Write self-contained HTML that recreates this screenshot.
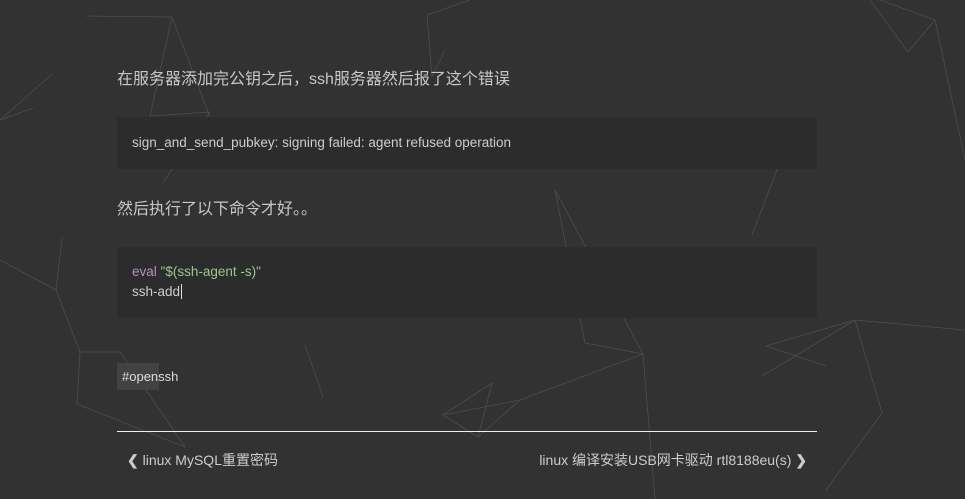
<!DOCTYPE html>
<html><head><meta charset="utf-8"><style>
body{margin:0;width:965px;height:499px;background:#323232;overflow:hidden;position:relative;font-family:"Liberation Sans","Noto Sans CJK SC",sans-serif;color:#ccc}
svg{position:absolute;left:0;top:0}
.t{position:absolute;left:117px;font-size:16px;color:#c8c8c8}
.code{position:absolute;left:117px;width:700px;background:#2c2c2c;font-size:13.5px;color:#ccc}
</style></head><body>
<svg width="965" height="499" stroke="#4d4d4d" stroke-width="0.8" fill="none">
<line x1="0" y1="120" x2="52" y2="74"/><line x1="0" y1="120" x2="33" y2="108"/><line x1="86" y1="16" x2="172" y2="17"/>
<line x1="172" y1="17" x2="210" y2="117"/><line x1="172" y1="17" x2="150" y2="116"/><line x1="150" y1="116" x2="210" y2="112"/><line x1="210" y1="112" x2="163" y2="183"/>
<line x1="427" y1="15" x2="432" y2="77"/><line x1="427" y1="15" x2="470" y2="0"/><line x1="432" y1="77" x2="445" y2="50"/>
<line x1="880" y1="0" x2="935" y2="20"/><line x1="935" y1="20" x2="908" y2="52"/><line x1="908" y1="52" x2="870" y2="0"/><line x1="935" y1="20" x2="965" y2="160"/>
<line x1="780" y1="162" x2="752" y2="235"/><line x1="555" y1="190" x2="643" y2="354"/><line x1="555" y1="190" x2="585" y2="343"/><line x1="585" y1="343" x2="643" y2="354"/><line x1="643" y1="354" x2="655" y2="499"/>
<line x1="643" y1="354" x2="520" y2="400"/><line x1="520" y1="400" x2="478" y2="437"/><line x1="520" y1="400" x2="443" y2="415"/><line x1="443" y1="415" x2="478" y2="437"/><line x1="492" y1="383" x2="443" y2="415"/><line x1="492" y1="383" x2="478" y2="437"/>
<line x1="766" y1="346" x2="855" y2="320"/><line x1="855" y1="320" x2="762" y2="376"/><line x1="766" y1="346" x2="826" y2="366"/><line x1="855" y1="320" x2="882" y2="413"/><line x1="882" y1="413" x2="826" y2="490"/><line x1="855" y1="320" x2="965" y2="330"/>
<line x1="62" y1="238" x2="56" y2="290"/><line x1="56" y1="290" x2="80" y2="352"/><line x1="80" y1="352" x2="77" y2="404"/><line x1="80" y1="352" x2="120" y2="352"/><line x1="77" y1="404" x2="185" y2="447"/><line x1="0" y1="260" x2="56" y2="290"/>
<line x1="305" y1="345" x2="323" y2="397"/><line x1="120" y1="352" x2="185" y2="447"/>
</svg>
<div class="t" style="top:65px">在服务器添加完公钥之后，ssh服务器然后报了这个错误</div>
<div class="code" style="top:117px;height:52px;line-height:52px;padding-left:15px;width:685px">sign_and_send_pubkey: signing failed: agent refused operation</div>
<div class="t" style="top:195px">然后执行了以下命令才好。。</div>
<div class="code" style="top:247px;height:71px;padding-left:15px;width:685px;line-height:20px"><div style="margin-top:15px"><span style="color:#b294bb">eval</span> <span style="color:#9fc58a">"$(ssh-agent -s)"</span></div><div>ssh-add<span style="border-left:1px solid #ddd;margin-left:1px"></span></div></div>
<div style="position:absolute;left:117px;top:363px;width:37px;height:27px;line-height:27px;background:#424242;font-size:13px;color:#ddd;padding-left:5px">#openssh</div>
<div style="position:absolute;left:117px;top:431px;width:700px;height:1px;background:#eee"></div>
<div style="position:absolute;left:127px;top:450px;font-size:14px;color:#ccc"><b>❮</b> linux MySQL重置密码</div>
<div style="position:absolute;right:158px;top:450px;font-size:14px;color:#ccc">linux 编译安装USB网卡驱动 rtl8188eu(s) <b>❯</b></div>
</body></html>
